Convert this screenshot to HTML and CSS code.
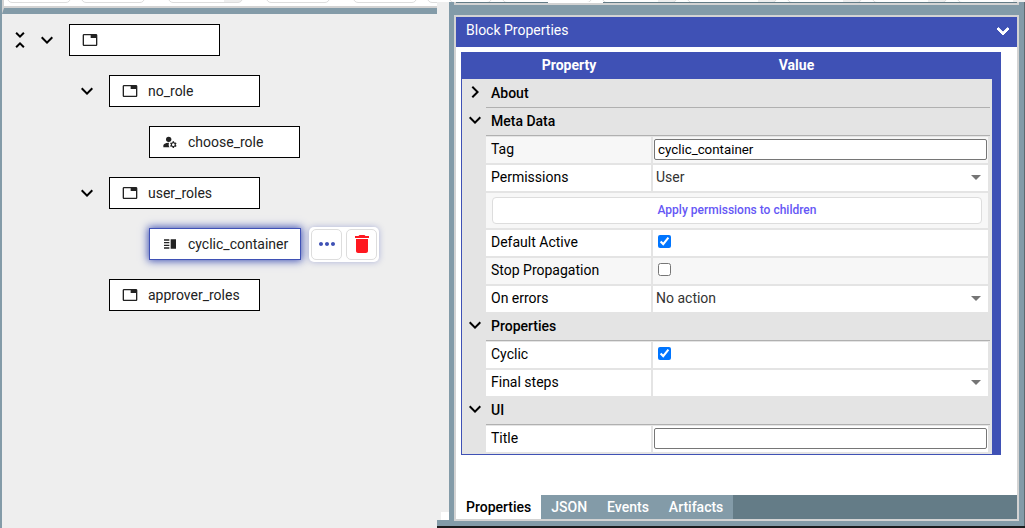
FILE: index.html
```html
<!DOCTYPE html>
<html lang="en">
<head>
<meta charset="utf-8">
<title>Policy configuration</title>
<link rel="stylesheet" href="styles.css">
</head>
<body>
<svg class="sprite" aria-hidden="true">
  <symbol id="tab" viewBox="0 0 24 24"><path d="M21 3H3c-1.100 0-2 .9-2 2v14c0 1.100.9 2 2 2h18c1.100 0 2-.9 2-2V5c0-1.100-.9-2-2-2zm0 16H3V5h10v4h8v10z"/></symbol>
  <symbol id="accounts" viewBox="0 0 24 24"><circle cx="10" cy="8" r="4"/><path d="M10.670 13.020C10.450 13.010 10.230 13 10 13c-2.420 0-4.680.67-6.610 1.820C2.510 15.340 2 16.320 2 17.350V20h9.260C10.470 18.870 10 17.490 10 16c0-1.070.25-2.070.67-2.980z"/><path d="M20.750 16c0-.22-.03-.42-.06-.63l1.140-1.010-1-1.730-1.450.49c-.32-.27-.68-.48-1.080-.63L18 11h-2l-.3 1.490c-.4.15-.76.36-1.080.63l-1.450-.49-1 1.730 1.140 1.010c-.03.21-.06.41-.06.63s.03.42.06.63l-1.140 1.010 1 1.730 1.450-.49c.32.27.68.48 1.080.63L16 21h2l.3-1.490c.4-.15.76-.36 1.080-.63l1.450.49 1-1.730-1.140-1.010c.03-.21.06-.41.06-.63zM17 18c-1.100 0-2-.9-2-2s.9-2 2-2 2 .9 2 2-.9 2-2 2z"/></symbol>
  <symbol id="split" viewBox="0 0 24 24"><path d="M3 15h8v-2H3v2zm0 4h8v-2H3v2zm0-8h8V9H3v2zm0-6v2h8V5H3zm10 0h8v14h-8V5z"/></symbol>
  <symbol id="down" viewBox="0 0 24 24"><path d="M16.590 8.590L12 13.170 7.410 8.590 6 10l6 6 6-6z"/></symbol>
  <symbol id="right" viewBox="0 0 24 24"><path d="M8.590 16.590L13.170 12 8.590 7.410 10 6l6 6-6 6z"/></symbol>
  <symbol id="fold" viewBox="0 0 24 24"><path d="M7.410 18.590L8.830 20 12 16.830 15.170 20l1.410-1.410L12 14l-4.590 4.590zM16.590 5.410L15.170 4 12 7.170 8.830 4 7.410 5.410 12 10z"/></symbol>
  <symbol id="more" viewBox="0 0 24 24"><path d="M6 10c-1.100 0-2 .9-2 2s.9 2 2 2 2-.9 2-2-.9-2-2-2zm12 0c-1.100 0-2 .9-2 2s.9 2 2 2 2-.9 2-2-.9-2-2-2zm-6 0c-1.100 0-2 .9-2 2s.9 2 2 2 2-.9 2-2-.9-2-2-2z"/></symbol>
  <symbol id="delete" viewBox="0 0 24 24"><path d="M6 19c0 1.100.9 2 2 2h8c1.100 0 2-.9 2-2V7H6v12zM19 4h-3.500l-1-1h-5l-1 1H5v2h14V4z"/></symbol>
</svg>

<div class="page">
  <section class="tree-pane">
    <div class="toolbar">
      <button class="tool" aria-label="New"></button>
      <button class="tool" aria-label="Save"></button>
      <button class="tool tool-split tool-spaced" aria-label="Publish"></button>
      <button class="tool tool-spaced" aria-label="Import"></button>
      <button class="tool tool-spaced" aria-label="Export"></button>
      <button class="tool" aria-label="View"></button>
    </div>
    <ul class="tree">
      <li class="row level-0">
        <button class="icon-button fold" aria-label="Collapse all"><svg class="icon"><use href="#fold"/></svg></button>
        <button class="icon-button" aria-label="Collapse"><svg class="icon"><use href="#down"/></svg></button>
        <div class="node"><svg class="icon-small"><use href="#tab"/></svg></div>
      </li>
      <li class="row level-1">
        <button class="icon-button" aria-label="Collapse"><svg class="icon"><use href="#down"/></svg></button>
        <div class="node"><svg class="icon-small"><use href="#tab"/></svg>no_role</div>
      </li>
      <li class="row level-2">
        <div class="node"><svg class="icon-small"><use href="#accounts"/></svg>choose_role</div>
      </li>
      <li class="row level-1">
        <button class="icon-button" aria-label="Collapse"><svg class="icon"><use href="#down"/></svg></button>
        <div class="node"><svg class="icon-small"><use href="#tab"/></svg>user_roles</div>
      </li>
      <li class="row level-2">
        <div class="node selected"><svg class="icon-small"><use href="#split"/></svg>cyclic_container</div>
        <div class="actions">
          <button class="action" aria-label="More"><svg class="icon"><use href="#more"/></svg></button>
          <button class="action danger" aria-label="Delete"><svg class="icon"><use href="#delete"/></svg></button>
        </div>
      </li>
      <li class="row level-1 leaf">
        <div class="node"><svg class="icon-small"><use href="#tab"/></svg>approver_roles</div>
      </li>
    </ul>
  </section>

  <div class="gutter"><div class="notch"></div><div class="gutter-edge"></div></div>

  <section class="side-pane">
    <div class="side-toolbar">
      <button class="tool" aria-label="Undo"></button>
      <button class="tool tool-wide" aria-label="Containers"></button>
      <button class="tool tool-split" aria-label="Requests"></button>
      <button class="tool tool-wide tool-split" aria-label="Documents"></button>
      <button class="tool tool-split" aria-label="Tokens"></button>
      <button class="tool tool-split" aria-label="Reports"></button>
      <button class="tool tool-split" aria-label="Modules"></button>
    </div>
    <div class="side-body">
      <div class="upper-panel"><span class="upper-cap"></span></div>
      <div class="panel">
        <header class="panel-head">
          <span>Block Properties</span>
          <button class="icon-button panel-toggle" aria-label="Collapse panel"><svg class="icon"><use href="#down"/></svg></button>
        </header>
        <div class="panel-content">
          <div class="grid-frame">
            <table class="props">
              <colgroup><col class="col-toggle"><col class="col-name"><col></colgroup>
              <thead>
                <tr><th></th><th>Property</th><th class="value-head">Value</th></tr>
              </thead>
              <tbody>
                <tr class="group"><td class="toggle"><button class="icon-button" aria-label="Expand"><svg class="icon"><use href="#right"/></svg></button></td><th colspan="2"><div class="group-title">About</div></th></tr>
                <tr class="group"><td class="toggle"><button class="icon-button" aria-label="Collapse"><svg class="icon"><use href="#down"/></svg></button></td><th colspan="2"><div class="group-title">Meta Data</div></th></tr>
                <tr class="shaded"><td></td><th class="name"><label for="tag">Tag</label></th><td class="value"><input class="text" id="tag" type="text" value="cyclic_container"></td></tr>
                <tr><td></td><th class="name"><label for="permissions">Permissions</label></th><td class="value"><div class="select"><select id="permissions"><option>User</option></select></div></td></tr>
                <tr class="shaded"><td></td><td class="apply-cell" colspan="2"><button class="apply">Apply permissions to children</button></td></tr>
                <tr><td></td><th class="name"><label for="active">Default Active</label></th><td class="value"><input class="check" id="active" type="checkbox" checked></td></tr>
                <tr class="shaded"><td></td><th class="name"><label for="stop">Stop Propagation</label></th><td class="value"><input class="check" id="stop" type="checkbox"></td></tr>
                <tr><td></td><th class="name"><label for="errors">On errors</label></th><td class="value"><div class="select"><select id="errors"><option>No action</option></select></div></td></tr>
                <tr class="group"><td class="toggle"><button class="icon-button" aria-label="Collapse"><svg class="icon"><use href="#down"/></svg></button></td><th colspan="2"><div class="group-title">Properties</div></th></tr>
                <tr><td></td><th class="name"><label for="cyclic">Cyclic</label></th><td class="value"><input class="check" id="cyclic" type="checkbox" checked></td></tr>
                <tr><td></td><th class="name"><label for="steps">Final steps</label></th><td class="value"><div class="select"><select id="steps"><option></option></select></div></td></tr>
                <tr class="group"><td class="toggle"><button class="icon-button" aria-label="Collapse"><svg class="icon"><use href="#down"/></svg></button></td><th colspan="2"><div class="group-title">UI</div></th></tr>
                <tr><td></td><th class="name"><label for="title">Title</label></th><td class="value"><input class="text" id="title" type="text"></td></tr>
              </tbody>
            </table>
          </div>
        </div>
        <nav class="tabs">
          <button class="tab active">Properties</button>
          <button class="tab">JSON</button>
          <button class="tab">Events</button>
          <button class="tab">Artifacts</button>
        </nav>
      </div>
    </div>
  </section>
</div>
</body>
</html>
```
FILE: styles.css
```css
:root {
  --slate: #839ba8;
  --slate-dark: #647c87;
  --indigo: #3f51b5;
  --line: #d3d3d3;
  --cell: #e4e4e4;
}

* { box-sizing: border-box; }

body {
  margin: 0;
  font: 14px/20px Roboto, sans-serif;
  color: #000;
  background: #eee;
}

button, input, select { font-family: inherit; margin: 0; }
button { padding: 0; cursor: pointer; }
svg { display: block; fill: currentColor; }

.sprite { display: none; }
.icon { width: 24px; height: 24px; }
.icon-small { width: 16px; height: 16px; flex: none; }

.page {
  display: grid;
  grid-template-columns: minmax(0, 437fr) 12px minmax(0, 576fr);
  min-height: 100vh;
}

/* Block tree */
.tree-pane { border-left: 2px solid var(--slate); }

.toolbar {
  display: flex;
  align-items: flex-end;
  gap: 10px;
  height: 14px;
  padding: 0 0 3px 3px;
  background: #fff;
  border-left: 2px solid var(--line);
  border-bottom: 6px solid var(--slate);
  box-shadow: inset 0 -2px var(--line);
  overflow: hidden;
}

.tool {
  flex: none;
  width: 64px;
  height: 30px;
  background: #fff;
  border: 1px solid #ddd;
  border-radius: 5px;
}
.toolbar .tool { margin-bottom: 2px; }
.tool-wide { width: 90px; }
.tool-split {
  width: 75px;
  background: linear-gradient(to left, #eee 18px, #fff 18px);
}
.toolbar .tool-spaced { margin-left: 13px; }

.tree {
  display: flex;
  flex-direction: column;
  gap: 19px;
  margin: 0;
  padding: 10px 0 0 6px;
  list-style: none;
}

.row { display: flex; align-items: center; height: 32px; }
.level-1 { padding-left: 67px; }
.level-2 { padding-left: 141px; }
.level-1.leaf { padding-left: 101px; }

.icon-button {
  display: block;
  width: 24px;
  height: 24px;
  border: 0;
  background: none;
  color: #000;
}
.row .icon-button { margin-right: 10px; }
.row .fold { margin-right: 3px; }

.node {
  display: flex;
  align-items: center;
  gap: 10px;
  min-width: 151px;
  height: 32px;
  padding: 0 12px;
  background: #fff;
  border: 1px solid #000;
  color: #222;
}
.node.selected {
  border-color: var(--indigo);
  box-shadow: 0 0 8px 1px var(--indigo);
}

.actions {
  display: flex;
  gap: 4px;
  margin-left: 8px;
  padding: 2px;
  background: #fff;
  border-radius: 5px;
  box-shadow: 0 0 6px #3f51b560;
}
.action {
  display: grid;
  place-items: center;
  width: 31px;
  height: 31px;
  background: #fff;
  border: 1px solid #ddd;
  border-radius: 5px;
  color: var(--indigo);
}
.action.danger { color: #ff1820; }

/* Strip between the panes */
.gutter {
  display: flex;
  flex-direction: column;
  justify-content: flex-end;
  border-top: 2px solid #fff;
}
.notch { height: 8px; margin-left: 4px; background: #fff; }
.gutter-edge { height: 8px; background: var(--slate); border-bottom: 2px solid #1b1b1d; }

/* Property panel */
.side-pane {
  display: flex;
  flex-direction: column;
  border-bottom: 2px solid #1b1b1d;
}

.side-toolbar {
  display: flex;
  align-items: flex-end;
  gap: 10px;
  height: 2px;
  background: #fff;
  overflow: hidden;
}
.side-toolbar .tool { width: 75px; margin-bottom: -1px; }
.side-toolbar .tool:first-child { width: 43px; }
.side-toolbar .tool-wide { width: 90px; }

.side-body {
  flex: 1;
  display: flex;
  flex-direction: column;
  gap: 10px;
  padding: 0 5px 5px;
  background: var(--slate);
  border-right: 1px solid #5d6970;
}

.upper-panel {
  height: 3px;
  padding-left: 92px;
  background: var(--slate-dark);
  border: solid var(--line);
  border-width: 0 2px 2px;
}
.upper-cap { display: block; width: 55px; height: 1px; background: #fff; }

.panel {
  flex: 1;
  display: flex;
  flex-direction: column;
  background: #fff;
  border: 2px solid var(--line);
}

.panel-head {
  display: flex;
  align-items: center;
  justify-content: space-between;
  height: 30px;
  padding: 0 2px 4px 10px;
  background: var(--indigo);
  color: #fff;
}
.panel-head .panel-toggle { color: #fff; margin-top: 2px; }
.panel-toggle .icon { stroke: currentColor; }

.panel-content { flex: 1; padding: 5px 16px 16px 5px; }

.grid-frame {
  padding-bottom: 1px;
  border: 1px solid var(--indigo);
  border-right-width: 9px;
  background: var(--cell);
}

.props {
  width: 100%;
  table-layout: fixed;
  border-collapse: separate;
  border-spacing: 0;
}
.col-toggle { width: 24px; }
.col-name { width: 166px; }

.props th, .props td { height: 28px; padding: 0; text-align: left; font-weight: 400; }
.props thead th {
  height: 27px;
  padding-bottom: 2px;
  background: var(--indigo);
  border-bottom: 1px solid var(--cell);
  color: #fff;
  font-weight: 700;
  text-align: center;
}
.props thead .value-head { padding-right: 51px; }

.props .toggle { vertical-align: top; }
.toggle .icon-button { margin-left: 1px; }

.group-title {
  height: 28px;
  margin-right: 2px;
  padding: 3px 5px;
  border-bottom: 1px solid #b0b0b0;
  font-weight: 500;
}

.props .name, .props .value, .props .apply-cell {
  background: #fff;
  border: solid var(--cell);
  border-width: 1px 1px 1px 0;
}
.props .name { padding: 0 0 2px 5px; }
.props .value { padding-bottom: 2px; border-width: 1px 4px 1px 1px; }
.props .apply-cell { height: 37px; padding: 0 6px; border-right-width: 4px; }
.props .shaded .name, .props .shaded .value, .props .shaded .apply-cell { background: #f7f7f7; }

.text {
  display: block;
  width: calc(100% - 2px);
  height: 21px;
  margin-left: 1px;
  padding: 1px 3px;
  border: 1px solid #767676;
  border-radius: 2px;
  background: #fff;
  color: #000;
}

.check { display: block; width: 13px; height: 13px; margin: 0 0 2px 5px; }

.select { display: grid; align-items: center; }
.select select {
  grid-area: 1 / 1;
  width: 100%;
  height: 24px;
  padding: 0 20px 0 3px;
  border: 0;
  background: none;
  appearance: none;
  color: #333;
  font-size: 14px;
}
.select::after {
  content: "";
  grid-area: 1 / 1;
  justify-self: end;
  margin-right: 7px;
  border: 5px solid transparent;
  border-top-color: #757575;
  border-bottom: 0;
  pointer-events: none;
}

.apply {
  display: block;
  width: 100%;
  height: 27px;
  padding-bottom: 2px;
  background: #fff;
  border: 1px solid #ddd;
  border-radius: 4px;
  color: #6557f5;
  font-size: 12px;
  font-weight: 500;
}

.tabs { display: flex; height: 24px; background: var(--slate-dark); }
.tab {
  padding: 0 10px;
  border: 0;
  background: var(--slate);
  color: #fff;
  font-size: 14px;
  font-weight: 500;
}
.tab.active { background: #fff; color: #000; }
```
